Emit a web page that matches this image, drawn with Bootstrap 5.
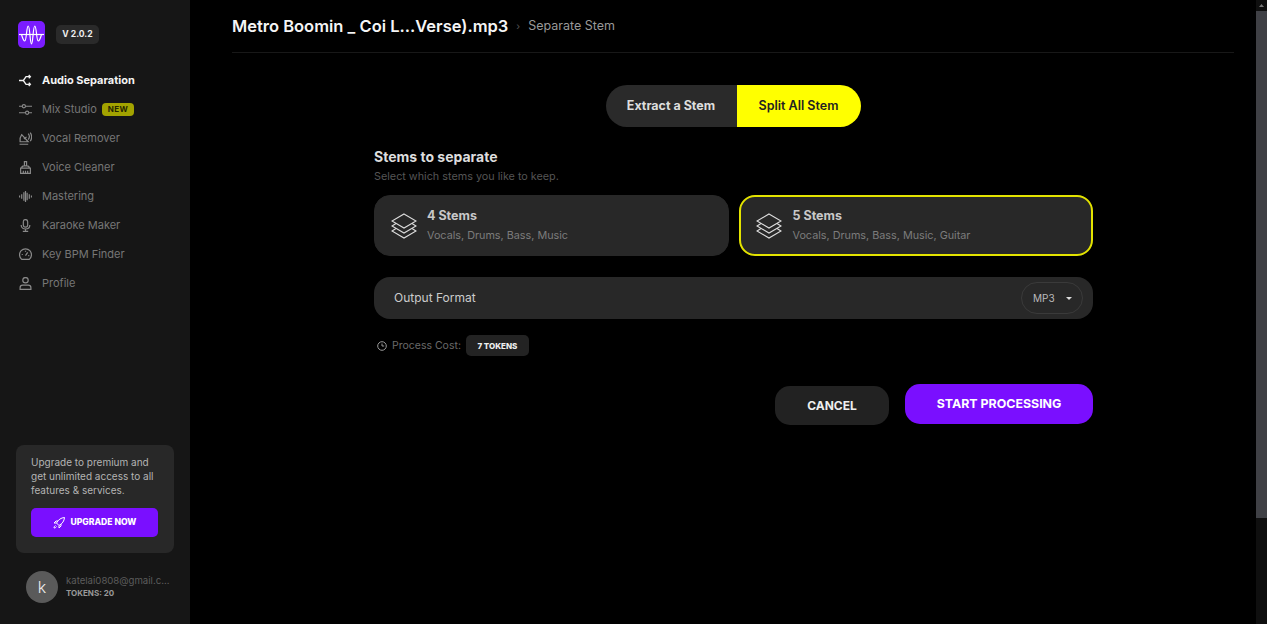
<!DOCTYPE html>
<html lang="en">
<head>
    <meta charset="UTF-8">
    <meta name="viewport" content="width=device-width, initial-scale=1.0">
    <link rel="stylesheet" href="https://cdn.jsdelivr.net/npm/bootstrap@5.3.0/dist/css/bootstrap.min.css">
    <title>Separate Stem</title>
    <style>
        html, body { height: 624px; overflow: hidden; }
        body { background: #000; color: #fff; font-family: "Inter", "Liberation Sans", sans-serif; }
        svg { display: block; flex-shrink: 0; }
        .app-shell { height: 624px; }

        /* sidebar */
        .side-bar { width: 190px; background: #161616; padding: 21px 16px 21px 18px; }
        .logo-box { width: 27px; height: 27px; border-radius: 5px; background: #7a1cff; }
        .version-tag { margin-left: 11px; height: 19px; width: 43px; background: #2a2a2a; border-radius: 5px; font-size: 8.6px; font-weight: 700; color: #eee; }
        .side-nav { margin-top: 18px; }
        .side-link { height: 29px; color: #777; font-size: 11px; text-decoration: none; gap: 10px; }
        .side-link svg { width: 13px; height: 13px; margin-left: 1px; }
        .side-link.on { color: #f4f4f4; font-weight: 700; }
        .new-tag { background: #a3a300; color: #262600; font-size: 8px; font-weight: 700; border-radius: 4px; padding: 2px 6px; margin-left: -5px; letter-spacing: .3px; line-height: 9px; }
        .promo-box { background: #282828; border-radius: 8px; margin: 0 0 0 -2px; width: 158px; padding: 10px 15px 16px; height: 108px; }
        .promo-box p { font-size: 10px; line-height: 14px; color: #b4b4b4; margin: 0 0 11px; }
        .upgrade-btn { background: #7a0fff; color: #fff; border: 0; border-radius: 5px; height: 29px; width: 127px; font-size: 8.6px; font-weight: 800; gap: 6px; padding: 0; }
        .user-row { margin-top: 18px; padding-left: 8px; gap: 8px; }
        .user-pic { width: 32px; height: 32px; border-radius: 50%; background: #5a5a5a; font-size: 16px; color: #eee; font-weight: 300; }
        .user-mail { font-size: 9.6px; color: #5c5c5c; line-height: 12px; }
        .user-tok { font-size: 8px; font-weight: 700; color: #999; line-height: 12px; }

        /* main */
        .main-pane { padding: 0 22px 0 42px; }
        .top-head { height: 53px; border-bottom: 1px solid #181818; gap: 8px; }
        .file-name { font-size: 16.5px; font-weight: 600; color: #f5f5f5; }
        .crumb-sep { color: #555; font-size: 10px; }
        .crumb-now { font-size: 12.5px; color: #999; }
        .mode-tabs { margin-top: 32px; height: 42px; width: 255px; border-radius: 21px; overflow: hidden; }
        .mode-tab { font-size: 12.5px; font-weight: 700; }
        .mode-off { width: 131px; background: #2a2a2a; color: #ddd; }
        .mode-on { width: 124px; background: #ff0; color: #222; font-weight: 600; }
        .form-wrap { width: 719px; margin: 22px 0 0 142px; }
        .sect-title { font-size: 14px; font-weight: 700; color: #ddd; line-height: 16px; }
        .sect-sub { font-size: 10.8px; color: #555; line-height: 14px; margin-top: 5px; }
        .stem-row { margin-top: 11px; gap: 10px; }
        .stem-card { flex: 1 1 0; height: 61px; background: #282828; border-radius: 16px; padding: 0 16px; gap: 10px; border: 1px solid #282828; }
        .stem-card.picked { border: 2px solid #e3e300; padding: 0 15px; gap: 11px; }
        .stem-card svg { width: 26px; height: 28px; }
        .stem-name { font-size: 12.5px; font-weight: 700; color: #c8c8c8; line-height: 15px; }
        .stem-list { font-size: 10.8px; color: #7c7c7c; line-height: 14px; margin-top: 6px; }
        .format-row { margin-top: 21px; height: 42px; background: #282828; border-radius: 16px; padding: 0 10px 0 20px; }
        .format-label { font-size: 12px; color: #ccc; }
        .format-pick { width: 62px; height: 32px; border: 1px solid #3a3a3a; border-radius: 16px; font-size: 10px; color: #bbb; padding: 0 10px 0 11px; }
        .format-caret { width: 0; height: 0; border-left: 3px solid transparent; border-right: 3px solid transparent; border-top: 3px solid #ddd; }
        .cost-row { margin-top: 16px; gap: 5px; padding-left: 3px; }
        .cost-text { font-size: 10.5px; color: #6a6a6a; }
        .cost-tag { width: 63px; height: 21px; background: #232323; border-radius: 5px; font-size: 8px; font-weight: 800; color: #eee; }
        .action-row { margin-top: 28px; gap: 16px; }
        .btn-cancel { width: 114px; height: 39px; margin-top: 2px; background: #222; color: #eee; border: 0; border-radius: 15px; font-size: 12px; font-weight: 700; padding: 0; }
        .btn-start { width: 188px; height: 40px; background: #7a0fff; color: #fff; border: 0; border-radius: 15px; font-size: 12.4px; font-weight: 700; padding: 0; }

        /* scrollbar */
        .scroll-track { width: 11px; background: #0f0f0f; }
        .scroll-up { height: 11px; }
        .scroll-thumb { height: 507px; background: #3f4045; }
    </style>
</head>
<body>
    <div class="app-shell d-flex">

        <!-- Sidebar -->
        <aside class="side-bar d-flex flex-column flex-shrink-0">
            <div class="d-flex align-items-center">
                <div class="logo-box">
                    <svg width="27" height="27" viewBox="0 0 27 27" fill="none" stroke="#fff" stroke-width="1.2">
                        <path d="M1 13.500H26"/>
                        <path d="M3.500 13.500C4.500 17 5.500 20 6.800 20 8.500 20 8.500 5 10.200 5 12 5 12 23 13.500 23 15 23 15 5 16.800 5 18.500 5 18.500 20 20.200 20 21.500 20 22.500 17 23.500 13.500"/>
                    </svg>
                </div>
                <div class="version-tag d-flex align-items-center justify-content-center">V 2.0.2</div>
            </div>

            <nav class="side-nav d-flex flex-column">
                <a href="#" class="side-link on d-flex align-items-center">
                    <svg viewBox="0 0 12 12" fill="none" stroke="#f4f4f4" stroke-width="1.2"><path d="M0 6h4l2.500-3.500H10M4 6l2.500 3.500H10"/><path d="M9 1l1.500 1.500L9 4M9 8l1.500 1.500L9 11"/></svg>
                    Audio Separation
                </a>
                <a href="#" class="side-link d-flex align-items-center">
                    <svg viewBox="0 0 12 12" fill="none" stroke="#8a8a8a" stroke-width="1"><path d="M0 3h3M6 3h6M0 9h6M9 9h3"/><circle cx="4.500" cy="3" r="1.500"/><circle cx="7.500" cy="9" r="1.500"/></svg>
                    Mix Studio <span class="new-tag">NEW</span>
                </a>
                <a href="#" class="side-link d-flex align-items-center">
                    <svg viewBox="0 0 12 12" fill="none" stroke="#8a8a8a" stroke-width="1.100"><path d="M.5 11.300h8M1 9h7.500L2.500 2.500C1 4.500.8 7 1 9z"/><path d="M4.500 6.500L7 4.500M8.500 1.500c1.200 1.500 1.200 4 0 5.500M10.300.5c1.800 2.200 1.800 6 0 8"/></svg>
                    Vocal Remover
                </a>
                <a href="#" class="side-link d-flex align-items-center">
                    <svg viewBox="0 0 12 12" fill="none" stroke="#8a8a8a" stroke-width="1.100"><path d="M5 .5h2v4H5zM2.500 6.500c0-1.200.8-2 2-2h3c1.200 0 2 .8 2 2M1.500 6.500h9v5h-9zM4 9v2.500M6 9v2.500M8 9v2.500"/></svg>
                    Voice Cleaner
                </a>
                <a href="#" class="side-link d-flex align-items-center">
                    <svg viewBox="0 0 12 12" fill="none" stroke="#8a8a8a" stroke-width="1.100"><path d="M.5 5v2M2.500 4v4M4.500 2v8M6 1v10M7.500 2.500v7M9.500 4v4M11.500 5v2"/></svg>
                    Mastering
                </a>
                <a href="#" class="side-link d-flex align-items-center">
                    <svg viewBox="0 0 12 12" fill="none" stroke="#8a8a8a" stroke-width="1.100"><rect x="4" y=".5" width="4" height="7" rx="2"/><path d="M2 5.500c0 5 8 5 8 0M6 9v2.500M3.500 11.500h5"/></svg>
                    Karaoke Maker
                </a>
                <a href="#" class="side-link d-flex align-items-center">
                    <svg viewBox="0 0 12 12" fill="none" stroke="#8a8a8a" stroke-width="1.100"><path d="M2.500 10.500a5.500 5.500 0 1 1 7 0z"/><path d="M6 7l2-3M2.500 6h1M8.500 7h1M6 2.500v1"/></svg>
                    Key BPM Finder
                </a>
                <a href="#" class="side-link d-flex align-items-center">
                    <svg viewBox="0 0 12 12" fill="none" stroke="#8a8a8a" stroke-width="1.100"><circle cx="6" cy="3" r="2.500"/><path d="M1 11.500V10c0-1.500 1-2.500 2.500-2.500h5C10 7.500 11 8.500 11 10v1.500z"/></svg>
                    Profile
                </a>
            </nav>

            <div class="mt-auto">
                <div class="promo-box">
                    <p>Upgrade to premium and get unlimited access to all features &amp; services.</p>
                    <button class="upgrade-btn btn d-flex align-items-center justify-content-center">
                        <svg width="12" height="12" viewBox="0 0 12 12" fill="none" stroke="#fff" stroke-width="1"><path d="M11.500.5C8 .8 5.500 2.500 3.500 6L6 8.500C9.500 6.500 11.200 4 11.500.5z"/><path d="M3.500 6H1l2-2h2M6 8.500V11l2-2V7M2.500 8.500c-1 .5-1.500 1.500-1.500 2.500 1 0 2-.5 2.500-1.500"/></svg>
                        UPGRADE NOW
                    </button>
                </div>
                <div class="user-row d-flex align-items-center">
                    <div class="user-pic d-flex align-items-center justify-content-center">k</div>
                    <div>
                        <div class="user-mail">katelai0808@gmail.c...</div>
                        <div class="user-tok">TOKENS: 20</div>
                    </div>
                </div>
            </div>
        </aside>

        <!-- Main -->
        <main class="main-pane flex-grow-1">
            <div class="top-head d-flex align-items-center">
                <span class="file-name">Metro Boomin _ Coi L...Verse).mp3</span>
                <span class="crumb-sep">›</span>
                <span class="crumb-now">Separate Stem</span>
            </div>

            <div class="mode-tabs d-flex mx-auto">
                <div class="mode-tab mode-off d-flex align-items-center justify-content-center">Extract a Stem</div>
                <div class="mode-tab mode-on d-flex align-items-center justify-content-center">Split All Stem</div>
            </div>

            <div class="form-wrap">
                <div class="sect-title">Stems to separate</div>
                <div class="sect-sub">Select which stems you like to keep.</div>

                <div class="stem-row d-flex">
                    <div class="stem-card d-flex align-items-center">
                        <svg viewBox="0 0 26 28" fill="none" stroke="#ddd" stroke-width="1.100"><path d="M13 2L25 9 13 16 1 9z"/><path d="M5 11.500L1 14l12 7 12-7-4-2.500"/><path d="M5 16.500L1 19l12 7 12-7-4-2.500"/></svg>
                        <div>
                            <div class="stem-name">4 Stems</div>
                            <div class="stem-list">Vocals, Drums, Bass, Music</div>
                        </div>
                    </div>
                    <div class="stem-card picked d-flex align-items-center">
                        <svg viewBox="0 0 26 28" fill="none" stroke="#ddd" stroke-width="1.100"><path d="M13 2L25 9 13 16 1 9z"/><path d="M5 11.500L1 14l12 7 12-7-4-2.500"/><path d="M5 16.500L1 19l12 7 12-7-4-2.500"/></svg>
                        <div>
                            <div class="stem-name">5 Stems</div>
                            <div class="stem-list">Vocals, Drums, Bass, Music, Guitar</div>
                        </div>
                    </div>
                </div>

                <div class="format-row d-flex align-items-center justify-content-between">
                    <span class="format-label">Output Format</span>
                    <div class="format-pick d-flex align-items-center justify-content-between">
                        MP3 <span class="format-caret"></span>
                    </div>
                </div>

                <div class="cost-row d-flex align-items-center">
                    <svg width="10" height="10" viewBox="0 0 10 10" fill="none" stroke="#999" stroke-width="1"><circle cx="5" cy="5" r="4.300"/><path d="M5 2.500V5h2.200"/></svg>
                    <span class="cost-text">Process Cost:</span>
                    <span class="cost-tag d-flex align-items-center justify-content-center">7 TOKENS</span>
                </div>

                <div class="action-row d-flex justify-content-end">
                    <button class="btn btn-cancel">CANCEL</button>
                    <button class="btn btn-start">START PROCESSING</button>
                </div>
            </div>
        </main>

        <!-- Scrollbar -->
        <div class="scroll-track flex-shrink-0">
            <div class="scroll-up d-flex align-items-center justify-content-center">
                <svg width="5" height="3" viewBox="0 0 5 3"><path d="M2.500 0L5 3H0z" fill="#777"/></svg>
            </div>
            <div class="scroll-thumb"></div>
        </div>
    </div>

    <script src="https://cdn.jsdelivr.net/npm/bootstrap@5.3.0/dist/js/bootstrap.bundle.min.js"></script>
</body>
</html>
